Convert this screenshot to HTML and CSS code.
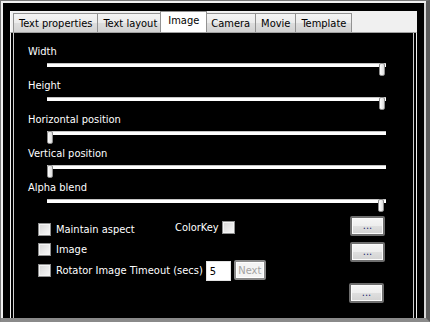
FILE: index.html
```html
<!DOCTYPE html>
<html lang="en">
<head>
    <meta charset="UTF-8">
    <meta name="viewport" content="width=device-width, initial-scale=1.0">
    <title>Image settings</title>
    <link rel="stylesheet" href="styles.css">
</head>
<body>
    <div class="window">
        <div class="tabcontrol">
            <div class="tabstrip">
                <div class="tab">Text properties</div>
                <div class="tab">Text layout</div>
                <div class="tab tab-active">Image</div>
                <div class="tab">Camera</div>
                <div class="tab">Movie</div>
                <div class="tab">Template</div>
            </div>

            <div class="page">
                <div class="field">
                    <div class="field-label">Width</div>
                    <div class="slider"><div class="track"></div><div class="thumb thumb-max"></div></div>
                </div>
                <div class="field">
                    <div class="field-label">Height</div>
                    <div class="slider"><div class="track"></div><div class="thumb thumb-max"></div></div>
                </div>
                <div class="field">
                    <div class="field-label">Horizontal position</div>
                    <div class="slider"><div class="track"></div><div class="thumb thumb-min"></div></div>
                </div>
                <div class="field">
                    <div class="field-label">Vertical position</div>
                    <div class="slider"><div class="track"></div><div class="thumb thumb-min"></div></div>
                </div>
                <div class="field">
                    <div class="field-label">Alpha blend</div>
                    <div class="slider"><div class="track"></div><div class="thumb thumb-max alpha"></div></div>
                </div>

                <div class="options">
                    <div class="opt-row row-aspect">
                        <label class="check check-aspect"><span class="box"></span>Maintain aspect</label>
                        <label class="colorkey">ColorKey<span class="box"></span></label>
                        <button class="browse">...</button>
                    </div>
                    <div class="opt-row row-image">
                        <label class="check check-image"><span class="box"></span>Image</label>
                        <button class="browse">...</button>
                    </div>
                    <div class="opt-row row-rotator">
                        <label class="check check-rotator"><span class="box"></span>Rotator Image Timeout (secs)</label>
                        <input class="secs" type="text" value="5">
                        <button class="next" disabled>Next</button>
                    </div>
                    <div class="opt-row row-last">
                        <button class="browse browse-last">...</button>
                    </div>
                </div>
            </div>
        </div>
    </div>
</body>
</html>
```

FILE: styles.css
```css
body {
    margin: 0;
    background: #000;
    font-family: "DejaVu Sans Condensed", "DejaVu Sans", sans-serif;
    font-size: 11px;
    color: #fff;
}
.window {
    width: 430px;
    height: 322px;
    box-sizing: border-box;
    border-left: 1px solid #7a7a7a;
    border-top: 1px solid #7a7a7a;
    border-right: 4px solid #5c5c5c;
    border-bottom: 4px solid #8a8a8a;
    box-shadow: inset 2px 2px 0 #f0f0f0, inset -2px 0 0 #d8d8d8;
    padding: 10px 9px 0 9px;
    overflow: hidden;
}
.tabcontrol {
    display: flex;
    flex-direction: column;
    height: 320px;
}
.tabstrip {
    display: flex;
    align-items: flex-end;
    height: 21px;
    padding-left: 2px;
    background: #f0f0f0;
    border-left: 1px solid #fafafa;
}
.tab {
    height: 19px;
    box-sizing: border-box;
    padding: 0 5px;
    margin-right: -1px;
    line-height: 19px;
    color: #000;
    border: 1px solid #929292;
    border-bottom: none;
    background: linear-gradient(#f4f4f4, #ebebeb 50%, #dedede 50%, #d2d2d2);
}
.tab-active {
    position: relative;
    z-index: 1;
    height: 21px;
    line-height: 17px;
    margin: 0 -1px 0 -2px;
    padding: 0 7px;
    background: #fff;
}
.tab-active + .tab {
    margin-left: -1px;
}
.page {
    flex: 1;
    background: #000;
    border: 1px solid #f0f0f0;
    border-top-color: #a0a0a0;
    box-shadow: inset 2px 0 0 #000, inset -2px 0 0 #000, inset 3px 0 0 #d0d0d0, inset -3px 0 0 #d0d0d0;
    padding: 12px 31px 0 17px;
}
.field {
    height: 34px;
}
.field-label {
    height: 13px;
    line-height: 13px;
}
.slider {
    position: relative;
    height: 13px;
    width: 339px;
    margin: 2px 0 0 19px;
}
.track {
    margin-top: 5px;
    height: 3px;
    background: #fff;
    border-top: 1px solid #c4c4c4;
}
.thumb {
    position: absolute;
    top: 0;
    width: 6px;
    height: 13px;
    box-sizing: border-box;
    border: 1px solid #8d8d8d;
    border-radius: 2px;
    background: linear-gradient(90deg, #fff, #dcdcdc);
}
.thumb-min {
    left: 0;
}
.thumb-max {
    right: 1px;
}
.thumb-max.alpha {
    right: 2px;
}
.options {
    margin-top: 1px;
    padding-left: 10px;
}
.opt-row {
    display: flex;
    align-items: flex-start;
}
.row-aspect {
    height: 26px;
}
.row-image {
    height: 18px;
}
.row-rotator {
    height: 23px;
}
.check, .colorkey {
    display: flex;
    align-items: center;
    line-height: 13px;
}
.check {
    gap: 5px;
}
.colorkey {
    gap: 3px;
    margin-top: 5px;
}
.check-aspect {
    width: 137px;
    margin-top: 7px;
}
.check-image {
    margin-top: 1px;
}
.check-rotator {
    margin-top: 4px;
}
.box {
    width: 13px;
    height: 13px;
    box-sizing: border-box;
    border: 1px solid #8e8f8f;
    box-shadow: inset 0 0 0 1px #f4f4f4;
    background: linear-gradient(135deg, #d6d6d6, #f8f8f8);
}
button {
    font-family: inherit;
    font-size: 11px;
    padding: 0;
}
.browse {
    margin-left: auto;
    width: 35px;
    height: 20px;
    box-sizing: border-box;
    border: 2px solid #6e6e6e;
    border-radius: 2px;
    background: linear-gradient(#f6f6f6, #ededed 50%, #dfdfdf 50%, #d2d2d2);
    box-shadow: inset 0 0 0 1px #fbfbfb;
    color: #1b1f6e;
    line-height: 14px;
}
.browse-last {
    margin-right: 1px;
}
.secs {
    width: 25px;
    height: 20px;
    box-sizing: border-box;
    margin: 1px 0 0 3px;
    padding: 0 0 0 3px;
    border: 1px solid #e4e4e4;
    background: #fff;
    font-family: inherit;
    font-size: 11px;
    color: #000;
}
.next {
    width: 32px;
    height: 20px;
    box-sizing: border-box;
    margin-left: 3px;
    border: 2px solid #8a8a8a;
    border-radius: 2px;
    background: #f4f4f4;
    box-shadow: inset 0 0 0 1px #fff;
    color: #a3a3a3;
}
```
